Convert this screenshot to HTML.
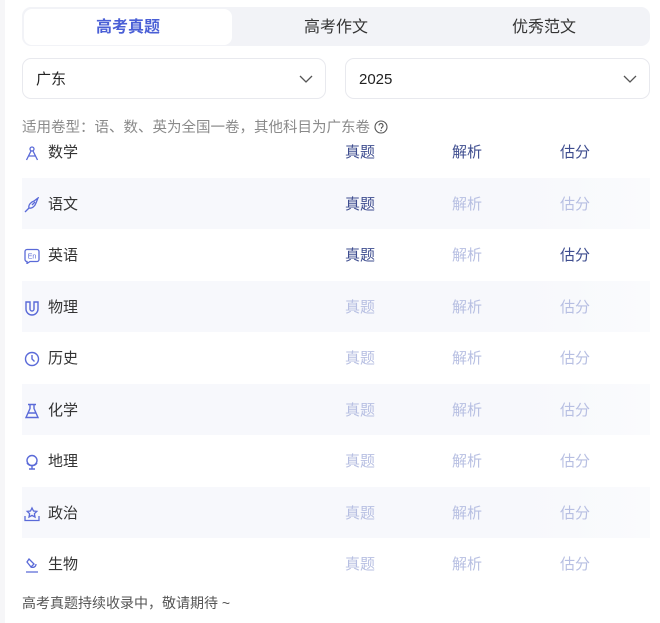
<!DOCTYPE html>
<html><head><meta charset="utf-8"><style>
body{margin:0;width:660px;height:623px;background:#fff;font-family:"Liberation Sans","Noto Sans CJK SC",sans-serif;position:relative;overflow:hidden}
.strip{position:absolute;left:0;top:0;width:5px;height:623px;background:#f6f6f8}
.tabs{position:absolute;left:22px;top:7px;width:628px;height:39px;background:#f2f3f7;border-radius:9px}
.tab{position:absolute;top:2px;height:36px;line-height:38px;text-align:center;font-size:16px;color:#333;width:208px}
.tab.on{background:#fff;border-radius:8px;color:#4a5fd6;font-weight:bold;left:2px}
.sel{position:absolute;top:58px;height:41px;border:1px solid #e8e9ee;border-radius:9px;line-height:41px;font-size:15px;color:#222;box-sizing:border-box;padding-left:13px}
.sel svg{position:absolute;right:12px;top:15px}
.note{position:absolute;left:22px;top:116px;font-size:14.5px;color:#8a8a8a}
.row{position:absolute;left:22px;width:628px;height:51px}
.row.s{background:linear-gradient(90deg,#f7f8fc 80%,#fafbfd)}
.ic{position:absolute;left:2px;top:19px}
.nm{position:absolute;left:26px;top:1px;line-height:51px;font-size:15px;color:#333}
.c{position:absolute;top:1px;line-height:51px;font-size:15px;color:#b7bfe2}
.c.a{color:#3e4d8f}
.c1{left:323px}.c2{left:430px}.c3{left:538px}
.foot{position:absolute;left:22px;top:593px;font-size:14px;color:#555}
</style></head><body>
<div class="strip"></div>
<div class="tabs">
<div class="tab on">高考真题</div>
<div class="tab" style="left:210px">高考作文</div>
<div class="tab" style="left:418px">优秀范文</div>
</div>
<div class="sel" style="left:22px;width:304px">广东<svg width="14" height="10" viewBox="0 0 14 10"><path d="M1 2l6 6 6-6" fill="none" stroke="#555" stroke-width="1.3"/></svg></div>
<div class="sel" style="left:345px;width:305px">2025<svg width="14" height="10" viewBox="0 0 14 10"><path d="M1 2l6 6 6-6" fill="none" stroke="#555" stroke-width="1.3"/></svg></div>
<div class="note">适用卷型：语、数、英为全国一卷，其他科目为广东卷 <svg width="14" height="14" viewBox="0 0 14 14" style="vertical-align:-2px"><circle cx="7" cy="7" r="6" fill="none" stroke="#555" stroke-width="1.1"/><path d="M5 5.5a2 2 0 1 1 2.5 2v1.3" fill="none" stroke="#555" stroke-width="1.1"/><circle cx="7" cy="10.6" r=".7" fill="#555"/></svg></div>

<div class="row" style="top:126px"><svg class="ic" width="16" height="16" viewBox="0 0 16 16" fill="none" stroke="#5a6ad8" stroke-width="1.3"><circle cx="8" cy="4" r="2"/><path d="M7 6L2.5 15M9 6l4.5 9M4 11h8"/></svg><span class="nm">数学</span><span class="c c1 a">真题</span><span class="c c2 a">解析</span><span class="c c3 a">估分</span></div>
<div class="row s" style="top:178px"><svg class="ic" width="16" height="16" viewBox="0 0 16 16" fill="none" stroke="#5a6ad8" stroke-width="1.3"><path d="M1 15l4-4M5 11c-1-3 2-6 5-7l4-3-2 5c-1 3-4 6-7 5zM8 8l3-3"/></svg><span class="nm">语文</span><span class="c c1 a">真题</span><span class="c c2">解析</span><span class="c c3">估分</span></div>
<div class="row" style="top:229px"><svg class="ic" width="16" height="16" viewBox="0 0 16 16" fill="none" stroke="#5a6ad8" stroke-width="1.3"><path d="M3 1.5h10a2 2 0 0 1 2 2v8a2 2 0 0 1-2 2H6l-3 2v-2a2 2 0 0 1-2-2v-8a2 2 0 0 1 2-2z"/><text x="8" y="10.5" font-size="7" text-anchor="middle" fill="#5a6ad8" stroke="none" font-family="Liberation Sans">En</text></svg><span class="nm">英语</span><span class="c c1 a">真题</span><span class="c c2">解析</span><span class="c c3 a">估分</span></div>
<div class="row s" style="top:281px"><svg class="ic" width="16" height="16" viewBox="0 0 16 16" fill="none" stroke="#5a6ad8" stroke-width="1.4"><path d="M2 2h4v7a2 2 0 0 0 4 0V2h4v7a6 6 0 0 1-12 0z"/></svg><span class="nm">物理</span><span class="c c1">真题</span><span class="c c2">解析</span><span class="c c3">估分</span></div>
<div class="row" style="top:332px"><svg class="ic" width="16" height="16" viewBox="0 0 16 16" fill="none" stroke="#5a6ad8" stroke-width="1.4"><circle cx="8" cy="8" r="6.5"/><path d="M8 4v4l2.5 2.5"/></svg><span class="nm">历史</span><span class="c c1">真题</span><span class="c c2">解析</span><span class="c c3">估分</span></div>
<div class="row s" style="top:384px"><svg class="ic" width="16" height="16" viewBox="0 0 16 16" fill="none" stroke="#5a6ad8" stroke-width="1.4"><path d="M4 1.5h8M6 1.5v4L2 14.5h12L10 5.5v-4M4 10h8"/></svg><span class="nm">化学</span><span class="c c1">真题</span><span class="c c2">解析</span><span class="c c3">估分</span></div>
<div class="row" style="top:435px"><svg class="ic" width="16" height="16" viewBox="0 0 16 16" fill="none" stroke="#5a6ad8" stroke-width="1.4"><circle cx="8" cy="6.5" r="5"/><path d="M8 11.5v3M5 15h6M3 9a6 6 0 0 0 10 0"/></svg><span class="nm">地理</span><span class="c c1">真题</span><span class="c c2">解析</span><span class="c c3">估分</span></div>
<div class="row s" style="top:487px"><svg class="ic" width="16" height="16" viewBox="0 0 16 16" fill="none" stroke="#5a6ad8" stroke-width="1.3"><path d="M8 2l1.5 3 3.3.4-2.4 2.3.6 3.3L8 9.4 5 11l.6-3.3L3.2 5.4l3.3-.4zM1 10v4.5h14V10"/></svg><span class="nm">政治</span><span class="c c1">真题</span><span class="c c2">解析</span><span class="c c3">估分</span></div>
<div class="row" style="top:538px"><svg class="ic" width="16" height="16" viewBox="0 0 16 16" fill="none" stroke="#5a6ad8" stroke-width="1.3"><path d="M5 2l5 5-3 3-4-5zM7 10c2 1 5 0 5-3M2 15h12"/></svg><span class="nm">生物</span><span class="c c1">真题</span><span class="c c2">解析</span><span class="c c3">估分</span></div>
<div class="foot">高考真题持续收录中，敬请期待 ~</div>
</body></html>
